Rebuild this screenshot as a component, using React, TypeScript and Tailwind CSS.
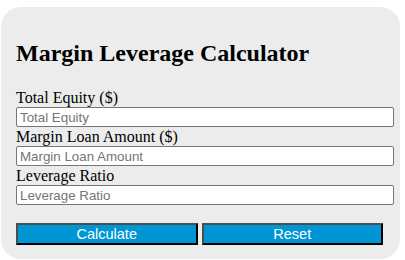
export default function App() {
  const fields = [
    { label: "Total Equity ($)", placeholder: "Total Equity" },
    { label: "Margin Loan Amount ($)", placeholder: "Margin Loan Amount" },
    { label: "Leverage Ratio", placeholder: "Leverage Ratio" },
  ];

  return (
    <div className="h-[260px] w-[405px] overflow-hidden bg-white pl-px pt-[7px]">
      <div className="w-[399px] rounded-[20px] bg-[#ebeceb] pb-[14px] pl-[15px] pr-[6px] pt-[34px] font-['Liberation_Serif',serif] text-black">
        <h2 className="mb-[22px] text-[24px] font-bold leading-[25px]">
          Margin Leverage Calculator
        </h2>

        {fields.map((f) => (
          <div key={f.label}>
            <label className="block text-[16px] leading-[19px]">{f.label}</label>
            <input
              type="text"
              placeholder={f.placeholder}
              className="block h-[20px] w-[378px] rounded-[2px] border border-[#767676] bg-white px-[3px] font-['Liberation_Sans',Arial,sans-serif] text-[13.33px] text-black placeholder:text-[#757575] outline-none"
            />
          </div>
        ))}

        <div className="mt-[18px] flex gap-[4px] pr-[11px]">
          <button className="h-[22px] flex-1 border-2 border-b-black border-l-[#4d4d4d] border-r-black border-t-[#4d4d4d] bg-[#0096d6] font-['Liberation_Sans',Arial,sans-serif] text-[14.5px] leading-none text-white">
            Calculate
          </button>
          <button className="h-[22px] flex-1 border-2 border-b-black border-l-[#4d4d4d] border-r-black border-t-[#4d4d4d] bg-[#0096d6] font-['Liberation_Sans',Arial,sans-serif] text-[14.5px] leading-none text-white">
            Reset
          </button>
        </div>
      </div>
    </div>
  );
}
